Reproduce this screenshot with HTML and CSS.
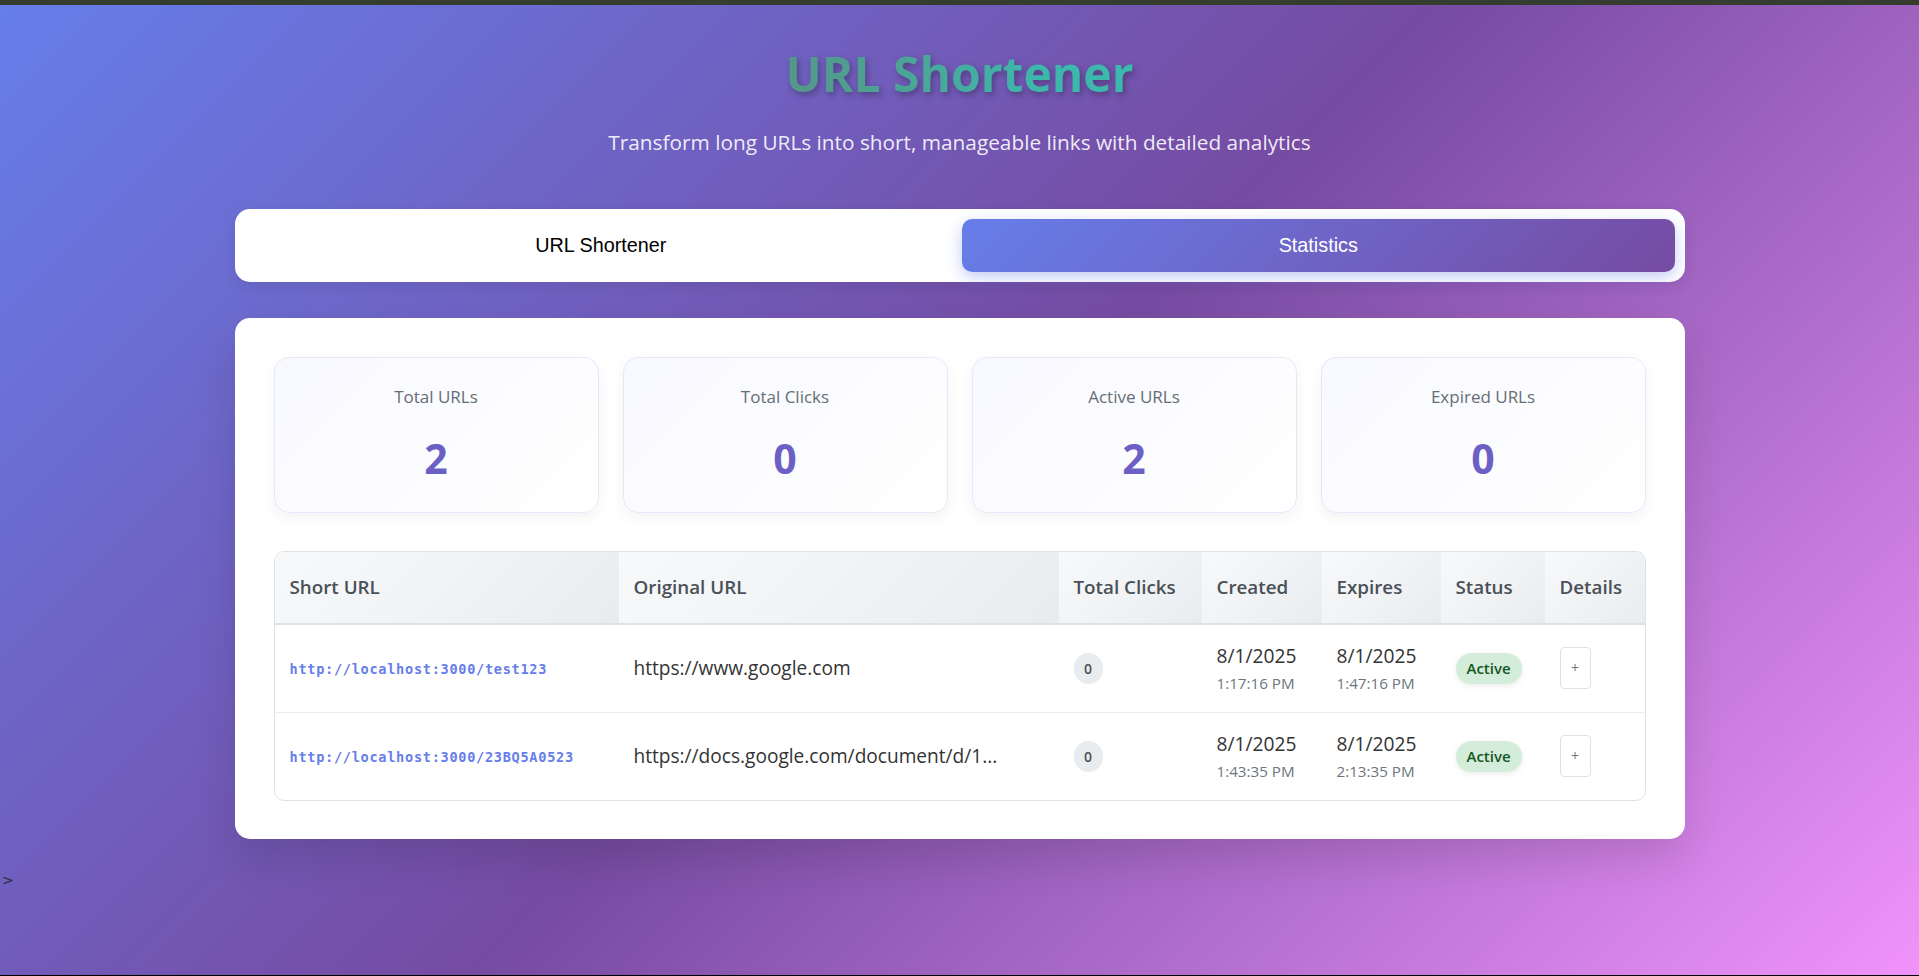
FILE: index.html
```html
<!DOCTYPE html>
<html lang="en">
<head>
<meta charset="utf-8">
<title>URL Shortener</title>
<link rel="stylesheet" href="styles.css">
</head>
<body>
<div class="topbar"></div>
<div class="page">
  <div class="container">
    <header class="header">
      <h1 class="title">URL Shortener</h1>
      <p class="subtitle">Transform long URLs into short, manageable links with detailed analytics</p>
    </header>
    <nav class="tabs">
      <button class="tab">URL Shortener</button>
      <button class="tab tab-active">Statistics</button>
    </nav>
    <main class="card">
      <div class="stats">
        <div class="stat"><div class="stat-label">Total URLs</div><div class="stat-value">2</div></div>
        <div class="stat"><div class="stat-label">Total Clicks</div><div class="stat-value">0</div></div>
        <div class="stat"><div class="stat-label">Active URLs</div><div class="stat-value">2</div></div>
        <div class="stat"><div class="stat-label">Expired URLs</div><div class="stat-value">0</div></div>
      </div>
      <div class="table-wrap">
        <table class="table">
          <colgroup>
            <col class="c-short"><col class="c-orig"><col class="c-clicks"><col class="c-created"><col class="c-expires"><col class="c-status"><col class="c-details">
          </colgroup>
          <thead>
            <tr><th>Short URL</th><th>Original URL</th><th>Total Clicks</th><th>Created</th><th>Expires</th><th>Status</th><th>Details</th></tr>
          </thead>
          <tbody>
            <tr>
              <td><span class="short">http://localhost:3000/test123</span></td>
              <td class="orig">https://www.google.com</td>
              <td><span class="badge">0</span></td>
              <td><div class="date">8/1/2025</div><div class="time">1:17:16 PM</div></td>
              <td><div class="date">8/1/2025</div><div class="time">1:47:16 PM</div></td>
              <td><span class="status">Active</span></td>
              <td><button class="details-btn">+</button></td>
            </tr>
            <tr>
              <td><span class="short">http://localhost:3000/23BQ5A0523</span></td>
              <td class="orig">https://docs.google.com/document/d/1...</td>
              <td><span class="badge">0</span></td>
              <td><div class="date">8/1/2025</div><div class="time">1:43:35 PM</div></td>
              <td><div class="date">8/1/2025</div><div class="time">2:13:35 PM</div></td>
              <td><span class="status">Active</span></td>
              <td><button class="details-btn">+</button></td>
            </tr>
          </tbody>
        </table>
      </div>
    </main>
  </div>
  <div class="stray">&gt;</div>
</div>
<div class="bottombar"></div>
</body>
</html>
```
FILE: styles.css
```css
html, body {
  margin: 0;
  padding: 0;
}
body {
  font-family: "Open Sans", "Noto Sans", sans-serif;
  height: 976px;
  overflow: hidden;
}
.topbar {
  height: 5px;
  background: #343d2e;
}
.bottombar {
  height: 1px;
  background: #000;
}
.page {
  height: 970px;
  overflow: hidden;
  background: linear-gradient(135deg, #667eea 0%, #764ba2 50%, #f093fb 100%);
}
.container {
  width: 1450px;
  margin: 0 auto;
  padding: 20px 0;
}
.header {
  text-align: center;
  padding: 20px 0;
  margin-bottom: 32.6px;
}
.title {
  display: table;
  margin: 0 auto 25px;
  font-size: 48px;
  line-height: 57.6px;
  font-weight: 700;
  color: transparent;
  background: linear-gradient(90deg, #54978a 0%, #4aa596 35%, #3eb6aa 70%, #3cb9ae 100%);
  -webkit-background-clip: text;
  background-clip: text;
  filter: drop-shadow(2px 3px 3px rgba(0, 0, 0, 0.3));
}
.subtitle {
  margin: 0;
  font-size: 20.8px;
  line-height: 28.8px;
  color: rgba(255, 255, 255, 0.9);
}
.tabs {
  display: flex;
  gap: 5px;
  padding: 10px;
  background: #fff;
  border-radius: 15px;
  margin-bottom: 36px;
  box-shadow: 0 5px 15px rgba(0, 0, 0, 0.08);
}
.tab {
  flex: 1;
  border: 0;
  background: transparent;
  font-family: "Liberation Sans", Arial, sans-serif;
  font-size: 19.8px;
  line-height: 23px;
  padding: 15px;
  border-radius: 10px;
  color: #000;
}
.tab-active {
  background: linear-gradient(135deg, #667eea 0%, #764ba2 100%);
  color: #fff;
  box-shadow: 0 5px 15px rgba(102, 126, 234, 0.4);
}
.card {
  display: block;
  background: #fff;
  border-radius: 15px;
  padding: 39px 39px 38px;
  box-shadow: 0 20px 40px rgba(0, 0, 0, 0.12);
}
.stats {
  display: grid;
  grid-template-columns: repeat(4, 1fr);
  gap: 24px;
  margin-bottom: 38px;
}
.stat {
  text-align: center;
  padding: 27px 20px 28px;
  border-radius: 15px;
  background: linear-gradient(135deg, #f8f9ff 0%, #ffffff 100%);
  border: 1px solid #e5e8fb;
  box-shadow: 0 5px 15px rgba(0, 0, 0, 0.05);
}
.stat-label {
  font-size: 17px;
  line-height: 24px;
  font-weight: 500;
  color: #656d75;
  margin-bottom: 23px;
}
.stat-value {
  font-size: 41px;
  line-height: 52px;
  font-weight: 700;
  color: #6c60c5;
}
.table-wrap {
  border: 1px solid #dee2e6;
  border-radius: 10px;
  overflow: hidden;
}
.table {
  width: 100%;
  border-collapse: collapse;
  table-layout: fixed;
}
.c-short { width: 344px; }
.c-orig { width: 440px; }
.c-clicks { width: 143px; }
.c-created { width: 120px; }
.c-expires { width: 119px; }
.c-status { width: 104px; }
.c-details { width: 100px; }
.table th {
  text-align: left;
  padding: 22px 15px;
  font-size: 18.8px;
  line-height: 27px;
  font-weight: 600;
  color: #495057;
  background: linear-gradient(135deg, #f8f9fa 0%, #e9ecef 100%);
  border-bottom: 2px solid #dee2e6;
  white-space: nowrap;
}
.table td {
  padding: 18px 15px;
  border-bottom: 1px solid #e9ecef;
  vertical-align: middle;
  color: #333;
  white-space: nowrap;
}
.table tbody tr:last-child td {
  border-bottom: 0;
}
.short {
  font-family: "DejaVu Sans Mono", "Liberation Mono", monospace;
  font-size: 13.6px;
  letter-spacing: 0.7px;
  font-weight: 700;
  color: #667eea;
}
.orig {
  font-size: 19.1px;
}
.badge {
  display: inline-block;
  background: #e9ecef;
  color: #495057;
  font-size: 14px;
  font-weight: 600;
  line-height: 19px;
  padding: 6px 10.5px;
  border-radius: 16px;
}
.date {
  font-size: 19.2px;
  line-height: 26px;
  color: #333;
}
.time {
  margin-top: 3px;
  font-size: 15.2px;
  line-height: 22px;
  color: #6c757d;
}
.status {
  display: inline-block;
  background: #d4edda;
  color: #155724;
  font-size: 15px;
  font-weight: 600;
  line-height: 21px;
  padding: 5px 11px;
  border-radius: 16px;
  box-shadow: 0 2px 6px rgba(0, 0, 0, 0.08);
}
.details-btn {
  font-family: "Open Sans", sans-serif;
  background: #fff;
  border: 1px solid #dee2e6;
  border-radius: 4px;
  color: #6c757d;
  font-size: 14px;
  line-height: 22px;
  padding: 9px 0;
  width: 31px;
}
.stray {
  font-family: "DejaVu Sans", sans-serif;
  font-size: 14px;
  line-height: 20px;
  margin-top: 11px;
  padding-left: 2px;
  color: #2a2a3a;
}
```
